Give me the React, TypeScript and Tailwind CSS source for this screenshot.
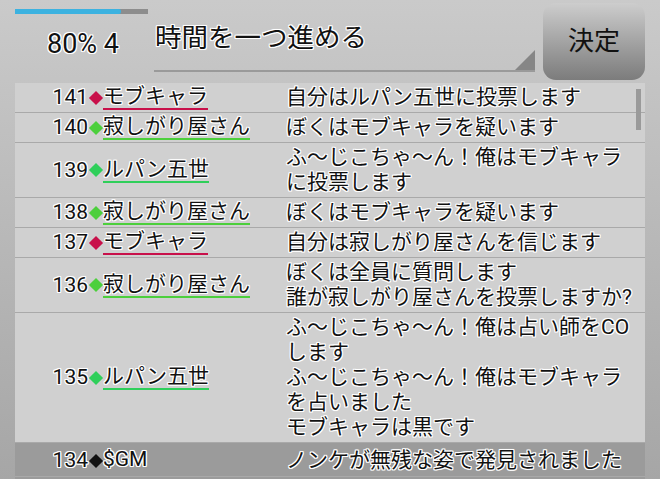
import React from "react";

type Row = {
  no: number;
  name: string;
  tone: "red" | "green" | "teal" | "gm";
  lines: string[];
};

const rows: Row[] = [
  { no: 141, name: "モブキャラ", tone: "red", lines: ["自分はルパン五世に投票します"] },
  { no: 140, name: "寂しがり屋さん", tone: "green", lines: ["ぼくはモブキャラを疑います"] },
  { no: 139, name: "ルパン五世", tone: "teal", lines: ["ふ～じこちゃ～ん！俺はモブキャラ", "に投票します"] },
  { no: 138, name: "寂しがり屋さん", tone: "green", lines: ["ぼくはモブキャラを疑います"] },
  { no: 137, name: "モブキャラ", tone: "red", lines: ["自分は寂しがり屋さんを信じます"] },
  { no: 136, name: "寂しがり屋さん", tone: "green", lines: ["ぼくは全員に質問します", "誰が寂しがり屋さんを投票しますか?"] },
  {
    no: 135,
    name: "ルパン五世",
    tone: "teal",
    lines: ["ふ～じこちゃ～ん！俺は占い師をCO", "します", "ふ～じこちゃ～ん！俺はモブキャラ", "を占いました", "モブキャラは黒です"],
  },
  { no: 134, name: "$GM", tone: "gm", lines: ["ノンケが無残な姿で発見されました"] },
  { no: 133, name: "$GM", tone: "gm", lines: ["さあ、投票の時間です"] },
];

// white halo around every glyph, like the in-game text
const outline =
  "[text-shadow:-1px_-1px_0_#fff,1px_-1px_0_#fff,-1px_1px_0_#fff,1px_1px_0_#fff,0_-1px_0_#fff,0_1px_0_#fff,-1px_0_0_#fff,1px_0_0_#fff,0_0_2px_#fff]";

function Diamond({ tone }: { tone: Row["tone"] }) {
  const color =
    tone === "red" ? "bg-[#c8104a]" : tone === "green" ? "bg-[#4ccf3c]" : tone === "teal" ? "bg-[#2fcf5a]" : "bg-[#111]";
  return (
    <span className="w-[15px] flex justify-center items-center">
      <span className={`block w-[10px] h-[10px] rotate-45 ${color}`} />
    </span>
  );
}

function LogRow({ row }: { row: Row }) {
  const line =
    row.tone === "red"
      ? "border-[#c8104a]"
      : row.tone === "green"
      ? "border-[#4ccf3c]"
      : row.tone === "teal"
      ? "border-[#2fcf5a]"
      : "border-transparent";
  return (
    <div
      className={`flex border-b border-[#a9a9a9] ${
        row.tone === "gm" ? "bg-[#9b9b9b] pt-[5px] pb-[3px]" : "py-[2px]"
      }`}
    >
      <div className="w-[271px] flex items-center">
        <span className="w-[73px] text-right leading-[23px]">{row.no}</span>
        <Diamond tone={row.tone} />
        <span className={`leading-[23px] border-b-2 ${line}`}>{row.name}</span>
      </div>
      <div className="w-[352px] leading-[25px]">
        {row.lines.map((l, i) => (
          <div key={i}>{l}</div>
        ))}
      </div>
    </div>
  );
}

export default function App() {
  return (
    <div
      className={`w-[660px] h-[479px] overflow-hidden flex flex-col bg-linear-to-b from-[#cacaca] to-[#a6a6a6] text-[#111] font-['Roboto','Noto_Sans_CJK_JP',sans-serif] ${outline}`}
    >
      <div className="flex h-[83px] shrink-0">
        <div className="w-[154px] pl-[15px] pt-[9px]">
          <div className="w-[133px] h-[5px] bg-[#8d8d8d]">
            <div className="w-[80%] h-full bg-[#3cb2e0] rounded-r-[2px]" />
          </div>
          <div className="pl-[32px] mt-[14px] text-[27px] leading-[32px]">80% 4</div>
        </div>

        <div className="relative w-[381px] h-[72px] border-b-2 border-[#9a9a9a]">
          <div className="pl-[1px] pt-[21px] text-[26.5px] leading-[34px]">時間を一つ進める</div>
          <svg className="absolute right-0 bottom-0" width="20" height="20" viewBox="0 0 20 20">
            <polygon points="20,0 20,20 0,20" fill="#868686" />
          </svg>
        </div>

        <button className="ml-[8px] mt-[3px] w-[102px] h-[77px] rounded-[13px] bg-linear-to-b from-[#cdcdcd] to-[#7c7c7c] text-[26px] text-[#111] flex items-center justify-center">
          決定
        </button>
      </div>

      <div className="relative ml-[15px] w-[630px] bg-[#d0d0d0] text-[21px]">
        {rows.map((r) => (
          <LogRow key={r.no} row={r} />
        ))}
        <div className="absolute right-[4px] top-[6px] w-[5px] h-[41px] bg-[#9a9a9a]" />
      </div>
    </div>
  );
}
